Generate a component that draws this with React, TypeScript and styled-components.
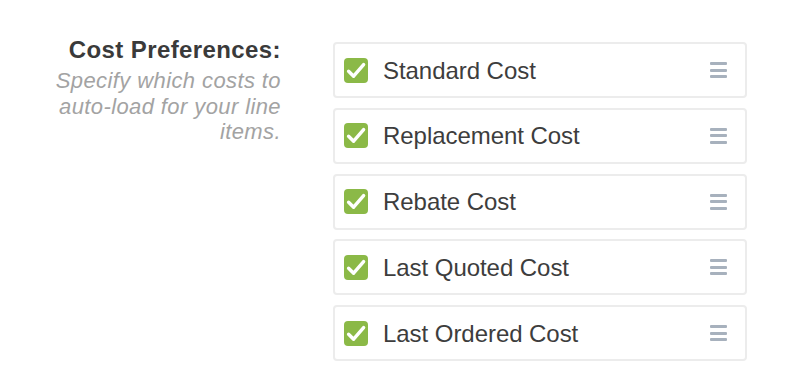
import React from "react";
import styled, { createGlobalStyle } from "styled-components";

const GlobalStyle = createGlobalStyle`
  body {
    margin: 0;
    background: #ffffff;
    font-family: "Liberation Sans", Arial, Helvetica, sans-serif;
  }
`;

const Page = styled.div`
  display: grid;
  grid-template-columns: 240px 414px;
  column-gap: 52px;
  padding: 36px 0 0 41px;
  width: 800px;
  height: 384px;
  box-sizing: border-box;
`;

const LabelColumn = styled.div`
  text-align: right;
`;

const Heading = styled.div`
  font-size: 24px;
  line-height: 28px;
  font-weight: 700;
  color: #3a3a3a;
  letter-spacing: 0.4px;
`;

const Hint = styled.div`
  margin-top: 4px;
  font-size: 22px;
  line-height: 25.5px;
  font-style: italic;
  color: #a3a3a3;
  letter-spacing: 0.4px;
`;

const List = styled.div`
  display: flex;
  flex-direction: column;
  gap: 9.75px;
  padding-top: 6px;
`;

const Row = styled.div`
  display: flex;
  align-items: center;
  height: 56px;
  box-sizing: border-box;
  border: 2px solid #ececec;
  border-radius: 4px;
  padding: 0 18px 0 9px;
  background: #fff;
`;

const Check = styled.span<{ checked: boolean }>`
  display: flex;
  align-items: center;
  justify-content: center;
  width: 24px;
  height: 25px;
  border-radius: 4px;
  background: ${(p) => (p.checked ? "#8bb947" : "#fff")};
  flex-shrink: 0;
`;

const Label = styled.span`
  margin-left: 15px;
  flex: 1;
  font-size: 24px;
  color: #3d3d3d;
  letter-spacing: -0.05px;
  padding-top: 1px;
`;

const Handle = styled.span`
  display: flex;
  flex-direction: column;
  gap: 3.5px;
  width: 17px;
`;

const Bar = styled.span`
  height: 3px;
  border-radius: 1px;
  background: #a7b1bd;
`;

const costs = [
  "Standard Cost",
  "Replacement Cost",
  "Rebate Cost",
  "Last Quoted Cost",
  "Last Ordered Cost",
];

const CheckIcon = () => (
  <svg width="24" height="25" viewBox="0 0 24 25">
    <path
      d="M4.6 13.2 L9.6 18.2 L19.6 6.6"
      fill="none"
      stroke="#fff"
      strokeWidth="3.4"
      strokeLinecap="round"
      strokeLinejoin="round"
    />
  </svg>
);

const CostRow = ({ label }: { label: string }) => (
  <Row>
    <Check checked>
      <CheckIcon />
    </Check>
    <Label>{label}</Label>
    <Handle>
      <Bar />
      <Bar />
      <Bar />
    </Handle>
  </Row>
);

export default function App() {
  return (
    <>
      <GlobalStyle />
      <Page>
        <LabelColumn>
          <Heading>Cost Preferences:</Heading>
          <Hint>Specify which costs to auto-load for your line items.</Hint>
        </LabelColumn>
        <List>
          {costs.map((c) => (
            <CostRow key={c} label={c} />
          ))}
        </List>
      </Page>
    </>
  );
}
